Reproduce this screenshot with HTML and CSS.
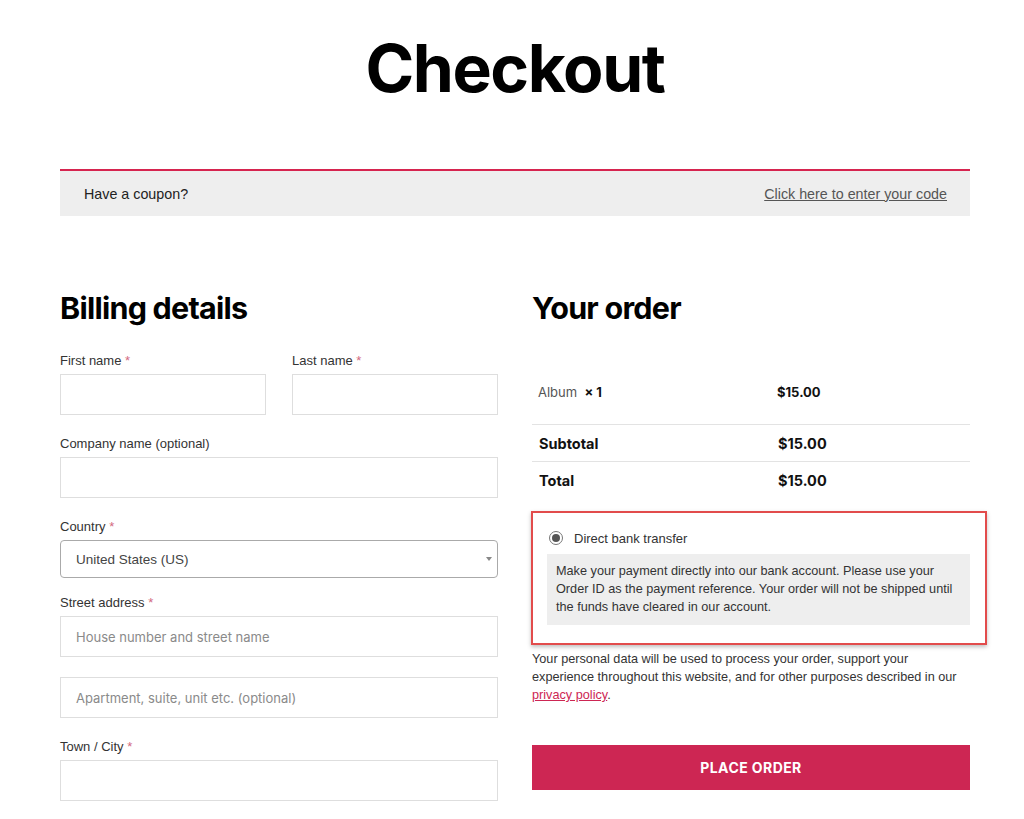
FILE: index.html
```html
<!DOCTYPE html>
<html lang="en">
<head>
<meta charset="utf-8">
<title>Checkout</title>
<link rel="stylesheet" href="styles.css">
</head>
<body>
<div class="page">
  <h1 class="title">Checkout</h1>
  <div class="coupon">
    <span>Have a coupon?</span>
    <a href="#" class="coupon-link">Click here to enter your code</a>
  </div>
  <div class="columns">
    <section class="billing">
      <h2 class="heading">Billing details</h2>
      <div class="row-2">
        <div class="field">
          <label class="label">First name <span class="req">*</span></label>
          <div class="input"></div>
        </div>
        <div class="field">
          <label class="label">Last name <span class="req">*</span></label>
          <div class="input"></div>
        </div>
      </div>
      <div class="field">
        <label class="label">Company name (optional)</label>
        <div class="input"></div>
      </div>
      <div class="field field-select">
        <label class="label">Country <span class="req">*</span></label>
        <div class="select"><span>United States (US)</span><span class="arrow"></span></div>
      </div>
      <div class="field field-street">
        <label class="label">Street address <span class="req">*</span></label>
        <div class="input"><span class="ph">House number and street name</span></div>
      </div>
      <div class="field">
        <div class="input"><span class="ph">Apartment, suite, unit etc. (optional)</span></div>
      </div>
      <div class="field">
        <label class="label">Town / City <span class="req">*</span></label>
        <div class="input"></div>
      </div>
    </section>
    <section class="order">
      <h2 class="heading">Your order</h2>
      <div class="otable">
        <div class="orow orow-item">
          <div class="ocell"><span class="pname">Album</span>&nbsp; <strong class="qty">×&nbsp;1</strong></div>
          <div class="ocell price">$15.00</div>
        </div>
        <div class="orow orow-total">
          <div class="ocell">Subtotal</div>
          <div class="ocell">$15.00</div>
        </div>
        <div class="orow orow-total orow-last">
          <div class="ocell">Total</div>
          <div class="ocell">$15.00</div>
        </div>
      </div>
      <div class="payment">
        <div class="method">
          <span class="radio"><span class="dot"></span></span>
          <span>Direct bank transfer</span>
        </div>
        <div class="pbox">Make your payment directly into our bank account. Please use your Order ID as the payment reference. Your order will not be shipped until the funds have cleared in our account.</div>
      </div>
      <p class="privacy">Your personal data will be used to process your order, support your experience throughout this website, and for other purposes described in our <a href="#">privacy policy</a>.</p>
      <button class="place">PLACE ORDER</button>
    </section>
  </div>
</div>
</body>
</html>
```
FILE: styles.css
```css
* { box-sizing: border-box; }
html, body { margin: 0; padding: 0; background: #fff; }
body {
  font-family: "Liberation Sans", Arial, sans-serif;
  color: #333;
  overflow: hidden;
}
.page {
  width: 910px;
  margin-left: 60px;
}
.title {
  font-family: Inter, "Noto Sans", sans-serif;
  font-weight: 700;
  font-size: 66px;
  letter-spacing: -0.022em;
  line-height: 80px;
  color: #000;
  text-align: center;
  margin: 28px 0 0 0;
}
.coupon {
  margin-top: 61px;
  height: 47px;
  border-top: 2px solid #d6244f;
  background: #eeeeee;
  display: flex;
  align-items: center;
  justify-content: space-between;
  padding: 0 23px 0 24px;
  font-size: 14.3px;
  color: #222;
}
.coupon-link {
  color: #555;
  text-decoration: underline;
}
.columns {
  display: grid;
  grid-template-columns: 438px 438px;
  column-gap: 34px;
  margin-top: 72px;
}
.heading {
  font-family: Inter, "Noto Sans", sans-serif;
  font-weight: 700;
  font-size: 30.5px;
  letter-spacing: -0.025em;
  line-height: 40px;
  color: #000;
  margin: 0 0 23px 0;
}
.row-2 {
  display: grid;
  grid-template-columns: 206px 206px;
  column-gap: 26px;
}
.field { margin-bottom: 19px; }
.label {
  display: block;
  font-size: 13px;
  line-height: 18px;
  color: #333;
  margin-bottom: 5px;
  position: relative;
  top: 1px;
}
.req { color: #d36a7f; }
.input {
  height: 41px;
  border: 1px solid #dedede;
  background: #fff;
  display: flex;
  align-items: center;
  padding: 0 15px;
}
.ph {
  font-family: Inter, "Noto Sans", sans-serif;
  font-size: 13px;
  color: #8a8a8a;
}
.field-select { margin-bottom: 15px; }
.select {
  height: 38px;
  border: 1px solid #aaa;
  border-radius: 4px;
  display: flex;
  align-items: center;
  justify-content: space-between;
  padding: 0 5px 0 15px;
  font-size: 13.5px;
  color: #444;
}
.arrow {
  width: 0;
  height: 0;
  border-left: 3.5px solid transparent;
  border-right: 3.5px solid transparent;
  border-top: 4px solid #888;
}
.field-street { margin-bottom: 20px; }

.otable {
  font-family: Inter, "Noto Sans", sans-serif;
  margin-top: 31px;
}
.orow {
  display: grid;
  grid-template-columns: 239px 1fr;
  border-bottom: 1px solid #e3e3e3;
}
.orow-last { border-bottom: none; }
.orow-item { height: 66px; align-items: center; font-size: 13px; }
.orow-item .ocell { padding: 0 6px; }
.pname { color: #555; }
.qty { color: #111; font-weight: 700; }
.price { font-weight: 700; color: #111; }
.orow-total {
  height: 37px;
  align-items: center;
  font-weight: 700;
  font-size: 14.5px;
  color: #111;
}
.orow-total .ocell { padding: 0 7px; }

.payment {
  margin-top: 12px;
  margin-left: -1px;
  margin-right: -17px;
  border: 2px solid #e24c4c;
  box-shadow: 0 2px 4px rgba(0,0,0,0.25);
  padding: 14px 15px 17px 14px;
  height: 134px;
}
.method {
  display: flex;
  align-items: center;
  height: 22px;
  font-size: 13px;
  color: #333;
}
.radio {
  width: 14px;
  height: 14px;
  border-radius: 50%;
  border: 1.5px solid #777;
  display: inline-flex;
  align-items: center;
  justify-content: center;
  margin-left: 2px;
  margin-right: 11px;
}
.dot {
  width: 8px;
  height: 8px;
  border-radius: 50%;
  background: #555;
}
.pbox {
  margin-top: 5px;
  background: #eeeeee;
  padding: 8px 9px 9px 9px;
  font-size: 12.7px;
  line-height: 18px;
  color: #333;
}
.privacy {
  margin: 5px 0 0 0;
  font-size: 12.7px;
  line-height: 18px;
  color: #333;
}
.privacy a { color: #cd2653; }
.place {
  display: block;
  width: 100%;
  height: 45px;
  margin-top: 41px;
  border: none;
  background: #cd2653;
  color: #fff;
  font-family: Inter, "Noto Sans", sans-serif;
  font-weight: 700;
  font-size: 14px;
  letter-spacing: 0.03em;
}
```
